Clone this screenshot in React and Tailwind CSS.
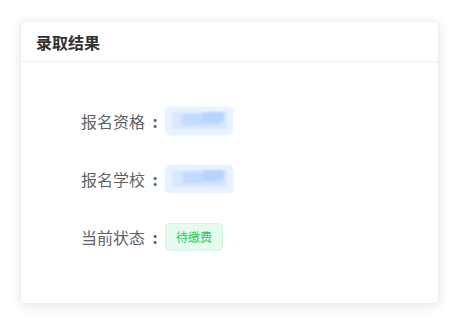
export default function App() {
  const rows = [
    { label: '报名资格', kind: 'blur' },
    { label: '报名学校', kind: 'blur' },
    { label: '当前状态', kind: 'tag' },
  ]

  return (
    <div className="min-h-[327px] bg-white pt-[21px] px-5 font-['Microsoft_YaHei','Noto_Sans_CJK_SC',sans-serif]">
      <div className="bg-white border border-[#ebeef5] rounded-[4px] shadow-[0_2px_12px_0_rgba(0,0,0,0.1)]">
        {/* 卡片头 */}
        <div className="h-10 px-[15px] flex items-center border-b border-[#ebeef5]">
          <h3 className="text-[16px] font-bold text-[#303133]">录取结果</h3>
        </div>

        {/* 内容 */}
        <div className="pt-[45px] pb-[52px] flex flex-col gap-[30px]">
          {rows.map((r, i) => (
            <div key={i} className="flex items-center h-[28px]">
              <span className="w-[144px] flex justify-end text-[16px] text-[#606266]">
                {r.label}
                <span className="w-[20px] text-center font-semibold">:</span>
              </span>
              {r.kind === 'blur' ? (
                <div className="relative w-[68px] h-[28px] rounded-[4px] border border-[#d9ecff] bg-[#eaf3ff] overflow-hidden blur-[0.8px]">
                  <div className="absolute left-[6px] right-[5px] top-[4px] bottom-[5px] bg-[#d8e8ff]" />
                  <div className="absolute left-[16px] right-[12px] top-[6px] bottom-[9px] bg-[#c4dbff]" />
                  <div className="absolute left-[36px] right-[8px] top-[4px] bottom-[12px] bg-[#b8d3ff]" />
                </div>
              ) : (
                <span className="h-[28px] px-[10px] flex items-center rounded-[4px] border border-[#d0f5e0] bg-[#e7faf0] text-[12px] text-[#13ce66]">
                  待缴费
                </span>
              )}
            </div>
          ))}
        </div>
      </div>
    </div>
  )
}
